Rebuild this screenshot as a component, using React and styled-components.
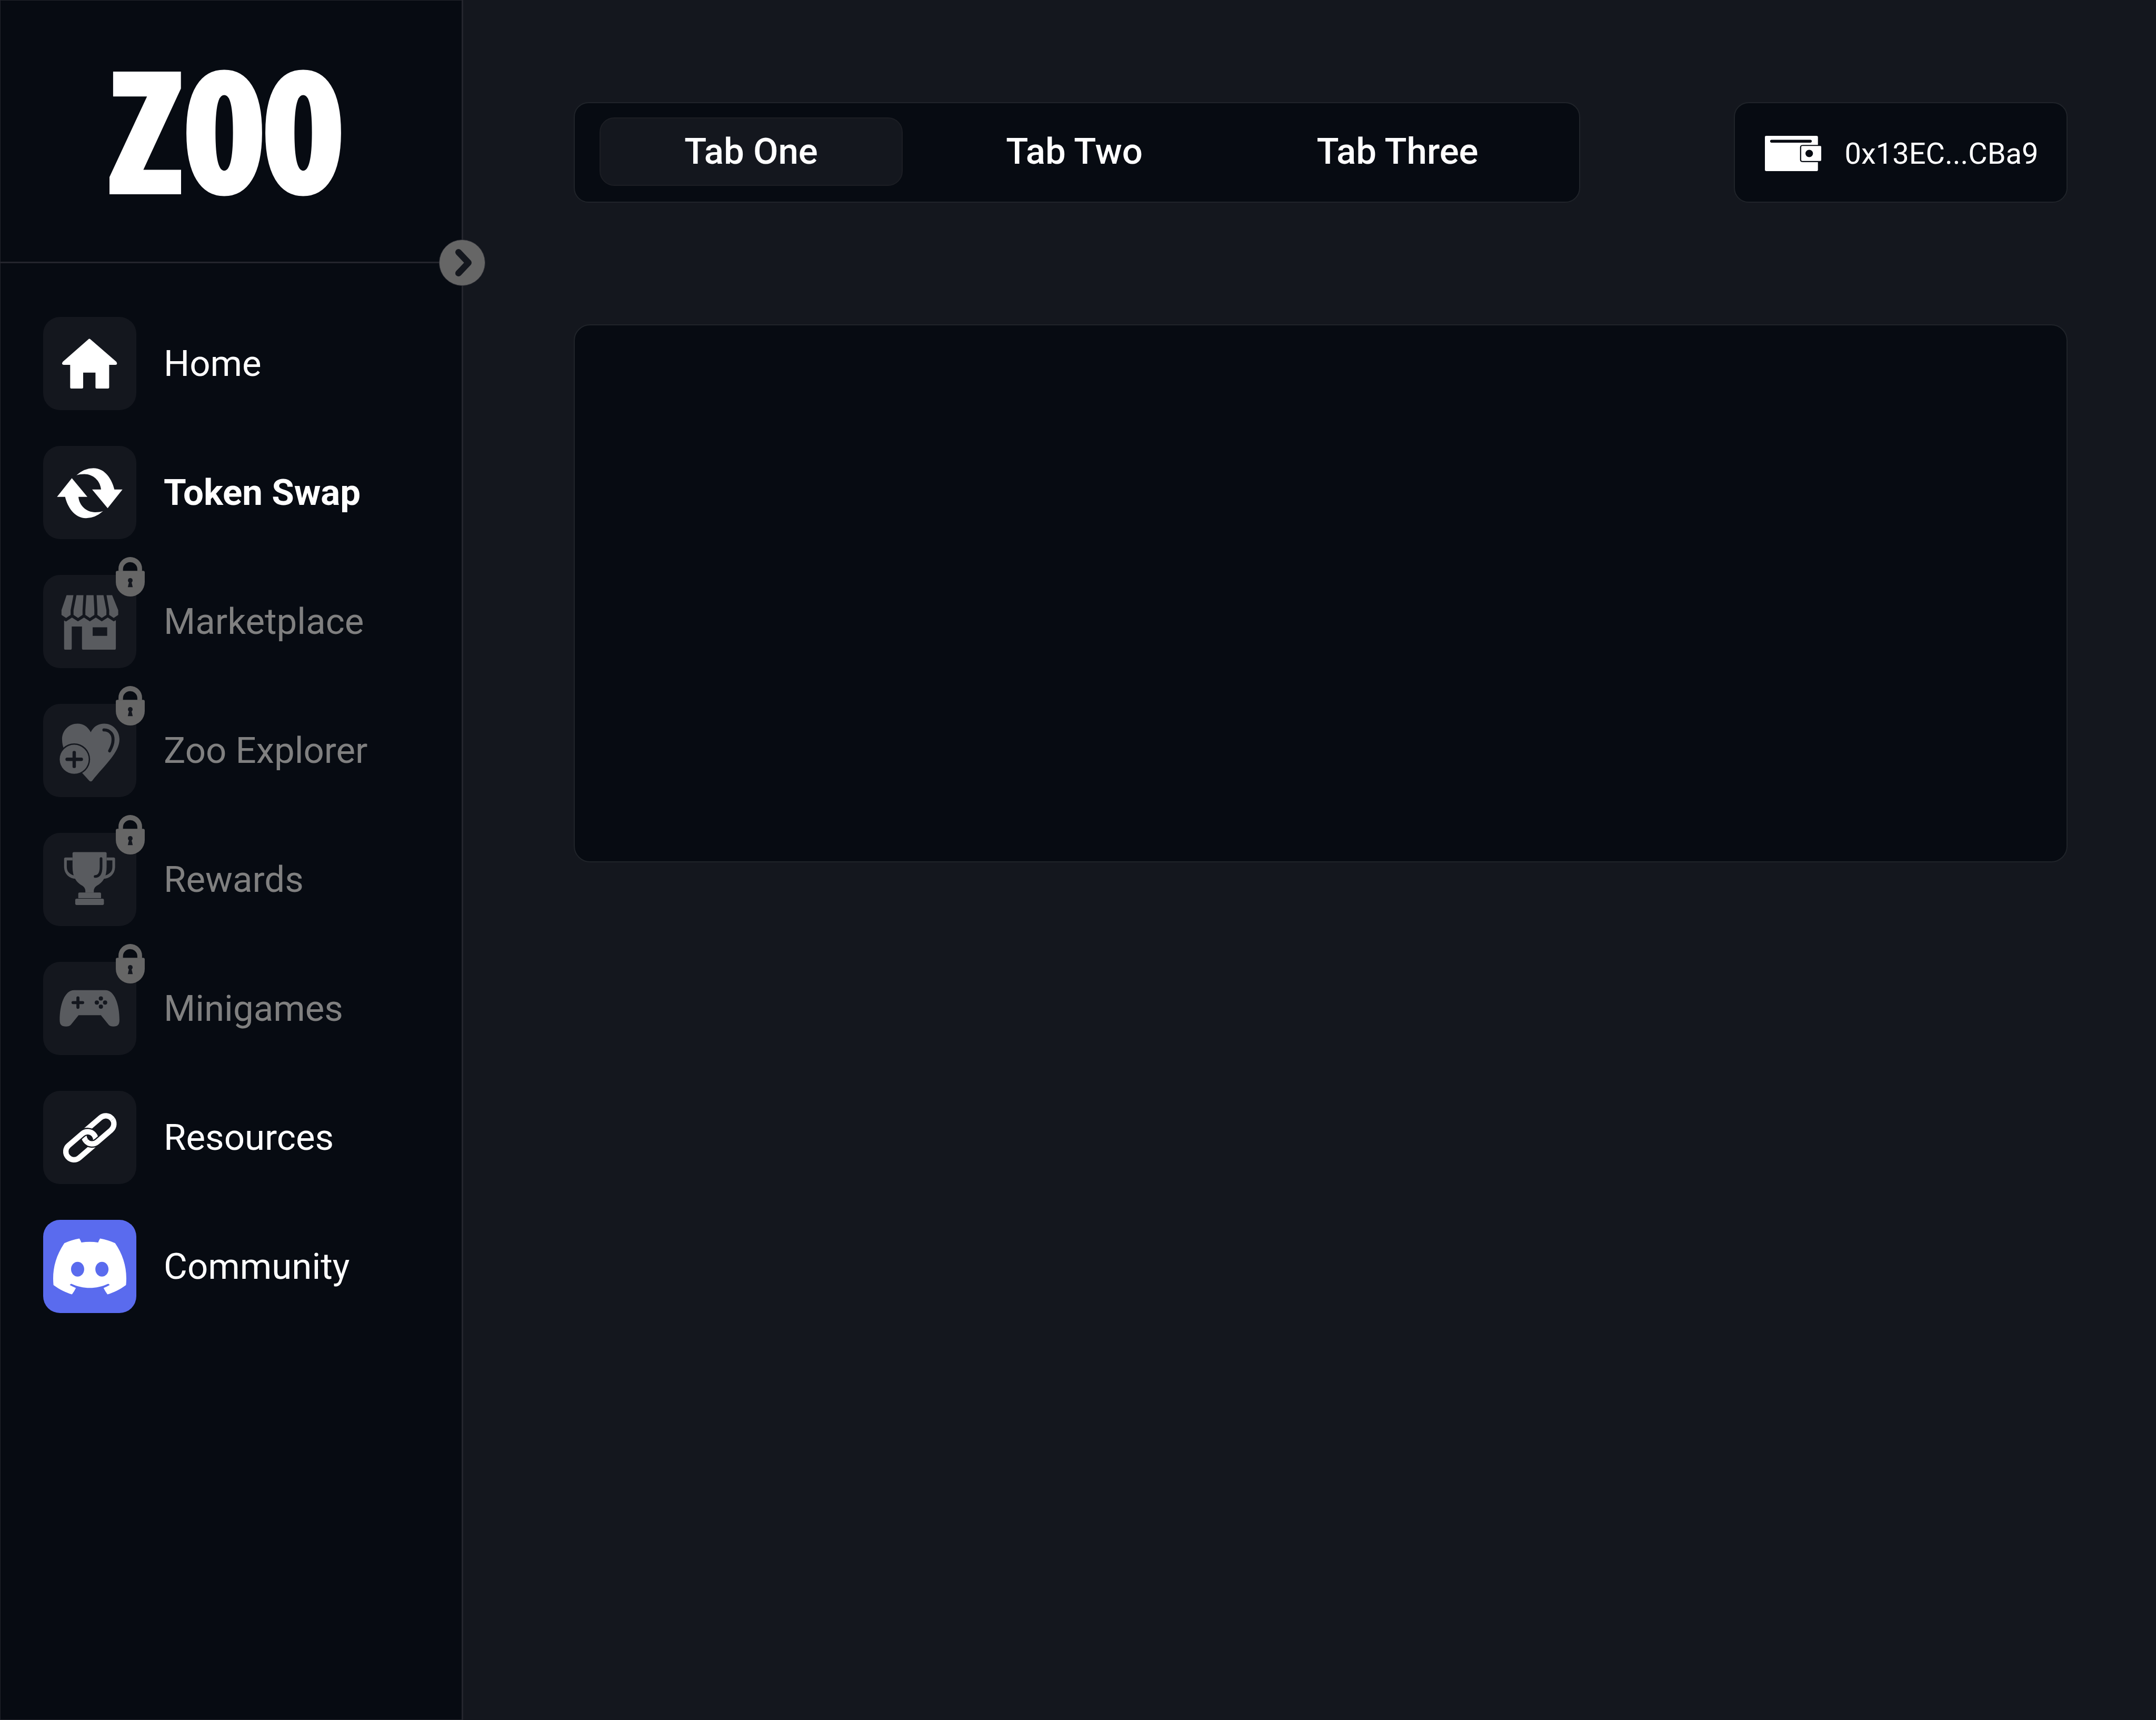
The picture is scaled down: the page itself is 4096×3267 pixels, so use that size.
import React, { useState } from "react";
import styled, { createGlobalStyle } from "styled-components";
import { SiDiscord } from "react-icons/si";

const color = {
  page: "#14171e",
  panel: "#070b12",
  line: "#24252d",
  cardLine: "#20242a",
  tile: "#14171e",
  muted: "#808080",
  mutedIcon: "#595b5f",
  badge: "#666666",
  discord: "#5a6bee",
};

const GlobalStyle = createGlobalStyle`
  * { box-sizing: border-box; }
  body {
    margin: 0;
    background: ${color.page};
    color: #ffffff;
    font-family: Roboto, "Liberation Sans", sans-serif;
  }
`;

const Page = styled.div`
  display: flex;
  min-height: 100vh;
  background: ${color.page};
`;

const Sidebar = styled.aside`
  position: relative;
  flex: none;
  width: 880px;
  background: ${color.panel};
  border: 1px solid ${color.line};
  border-right-width: 3px;
`;

const Brand = styled.header`
  position: relative;
  display: flex;
  align-items: center;
  justify-content: center;
  height: 499px;
  padding: 0 26px 32px 0;
  border-bottom: 3px solid ${color.line};
`;

const Logo = styled.span`
  font-family: "Noto Sans Mono CJK SC", "Liberation Sans Narrow", "Noto Sans CJK SC", sans-serif;
  font-size: 300px;
  line-height: 400px;
  font-weight: 900;
  -webkit-text-stroke: 10px #ffffff;
`;

const Toggle = styled.button`
  position: absolute;
  right: -45px;
  bottom: -46px;
  width: 88px;
  height: 88px;
  padding: 0;
  border: 1px solid #303138;
  border-radius: 50%;
  background: ${color.badge};
  cursor: pointer;

  svg {
    display: block;
    width: 100%;
    height: 100%;
  }
`;

const Nav = styled.nav`
  display: flex;
  flex-direction: column;
  gap: 68px;
  padding: 102px 81px;
`;

const NavLink = styled.a`
  display: flex;
  align-items: center;
  gap: 52px;
  color: ${(p) => (p.$locked ? color.muted : "#ffffff")};
  font-size: 69px;
  line-height: 80px;
  font-weight: ${(p) => (p.$active ? 700 : 400)};
  text-decoration: none;
  white-space: nowrap;
`;

const Tile = styled.span`
  position: relative;
  display: flex;
  align-items: center;
  justify-content: center;
  flex: none;
  width: 177px;
  height: 177px;
  border-radius: 32px;
  background: ${(p) => p.$fill || color.tile};
  color: ${(p) => (p.$locked ? color.mutedIcon : "#ffffff")};
`;

const Glyph = styled.svg`
  width: 100%;
  height: 100%;
  fill: currentColor;
`;

const LockBadge = styled.svg`
  position: absolute;
  top: -34px;
  right: -16px;
  width: 55px;
  height: 75px;
  fill: ${color.badge};
`;

const Main = styled.main`
  flex: 1;
  min-width: 0;
  display: flex;
  flex-direction: column;
  gap: 231px;
  padding: 194px 168px 194px 210px;
`;

const TopBar = styled.header`
  display: flex;
  align-items: stretch;
  justify-content: space-between;
  gap: 48px;
  height: 191px;
`;

const Tabs = styled.div`
  display: flex;
  flex: 0 1 1912px;
  gap: 38px;
  padding: 27px 57px 30px 47px;
  border: 2px solid ${color.cardLine};
  border-radius: 28px;
  background: ${color.panel};
`;

const Tab = styled.button`
  flex: 1;
  padding: 0;
  border: 2px solid ${(p) => (p.$active ? "#1c1e24" : "transparent")};
  border-radius: 28px;
  background: ${(p) => (p.$active ? color.tile : "transparent")};
  color: #ffffff;
  font-family: inherit;
  font-size: 69px;
  line-height: 80px;
  font-weight: 500;
  cursor: pointer;
`;

const Wallet = styled.button`
  display: flex;
  align-items: center;
  justify-content: center;
  gap: 44px;
  flex: none;
  width: 634px;
  padding: 4px 0 0 4px;
  border: 2px solid ${color.cardLine};
  border-radius: 28px;
  background: ${color.panel};
  color: #ffffff;
  font-family: inherit;
  font-size: 56px;
  line-height: 64px;
  cursor: pointer;
`;

const WalletGlyph = styled.svg`
  width: 107px;
  height: 67px;
  fill: currentColor;
`;

const Card = styled.section`
  height: 1022px;
  border: 2px solid ${color.cardLine};
  border-radius: 31px;
  background: ${color.panel};
`;

const HomeIcon = () => (
  <Glyph viewBox="0 0 276 276">
    <path
      fillRule="evenodd"
      d="M133.500 66.500Q137 63 140.500 66.500L217 133Q222 142 213 142H195.500V209Q195.500 212 192 212H158Q155 212 155 209V165H118.500V209Q118.500 212 115 212H83Q80 212 80 209V142H61Q53 141 58 133Z"
    />
  </Glyph>
);

const swapArrow =
  "M98.500 87Q122 66 149 66C184 66 204 100 211 129H235L191 184.500L145 129H171.500C169 103 148 83.500 122 83.500Q108 83.500 98.500 87Z";

const SwapIcon = () => (
  <Glyph viewBox="0 0 276 276">
    <path d={swapArrow} />
    <path d={swapArrow} transform="rotate(180 138 140)" />
  </Glyph>
);

const MarketIcon = () => (
  <Glyph viewBox="25 201 828 828">
    <polygon points="233,381 294,381 269,514 269,557 229,584 188,557 188,514" />
    <polygon points="321,381 383,381 375,514 375,557 335,584 295,557 295,514" />
    <polygon points="409,381 473,381 480,514 480,557 440,584 400,557 400,514" />
    <polygon points="500,381 561,381 587,514 587,557 546,584 507,557 507,514" />
    <polygon points="588,381 638,381 692,514 692,557 652,584 612,557 612,514" />
    <path
      fillRule="evenodd"
      d="M211 606L228 615L281 580L334 614L388 580L440 614L493 580L546 614L599 580L652 614L671 603V853Q671 865 659 865H382Q370 865 370 853V660H279V853Q279 865 267 865H223Q211 865 211 853ZM465 666V742H594V666Z"
    />
  </Glyph>
);

const ExplorerIcon = () => (
  <Glyph viewBox="0 0 276 276">
    <path d="M141 84C132 67 118 58.600 102 58.600C76 58.600 56 79 56 105C56 150 95 180 116 205L137 228Q141 231 145 228C182 181 226 145 226 105C226 79 206 58.600 181 58.600C164 58.600 149 67 141 84Z" />
    <circle cx="92" cy="164" r="47" fill={color.tile} />
    <circle cx="92" cy="164" r="43" />
    <g fill="none" stroke={color.tile} strokeWidth="10" strokeLinecap="round">
      <path d="M92 144V185M71 164H113" />
      <path d="M180 77C199 77 208 92 207 107C207 120 202 130 197 139" strokeWidth="9" />
    </g>
  </Glyph>
);

const trophyHandle =
  "M87 73H66Q62 73 62 77V102C63 122 77 135 97 136L91 126C77 121 70 114 70 100V81.500H87Z";

const TrophyIcon = () => (
  <Glyph viewBox="0 0 276 276">
    <path d="M91 57H184Q188 57 188 61V100C188 130 178 146 158 157Q150 163 150 172V177H125V172Q125 163 117 157C97 146 87 130 87 100V61Q87 57 91 57Z" />
    <path d={trophyHandle} />
    <path d={trophyHandle} transform="translate(275 0) scale(-1 1)" />
    <path d="M108 176.500H168Q171.500 176.500 171.500 180V193.500H104V180Q104 176.500 108 176.500Z" />
    <rect x="95" y="195" width="85" height="18.500" rx="4" />
    <path
      d="M171.500 76V100C171.500 117 167 129 154 129"
      fill="none"
      stroke={color.tile}
      strokeWidth="8"
      strokeLinecap="round"
    />
  </Glyph>
);

const GamepadIcon = () => (
  <Glyph viewBox="0 0 276 276">
    <path d="M92 84H184C212 84 226 128 226 172C226 186 221 191.500 208 191.500Q199 191.500 194 186.500L171 158H105L82 186.500Q77 191.500 68 191.500C54 191.500 49 186 49 172C49 128 63 84 92 84Z" />
    <path
      d="M103 106.500V134.500M88.500 120.500H117"
      stroke={color.tile}
      strokeWidth="9"
      strokeLinecap="round"
    />
    <g fill={color.tile}>
      <circle cx="171" cy="108.500" r="6.300" />
      <circle cx="159" cy="120.500" r="6.300" />
      <circle cx="183.500" cy="120.500" r="6.300" />
      <circle cx="171" cy="132.500" r="6.300" />
    </g>
  </Glyph>
);

const upperRing = {
  x: 368,
  y: 312.5,
  width: 305,
  height: 145,
  rx: 72.5,
  transform: "rotate(-40.700 520.500 385)",
};

const lowerRing = {
  x: 207,
  y: 454,
  width: 305,
  height: 145,
  rx: 72.5,
  transform: "rotate(-40.700 359.500 526.500)",
};

const ChainIcon = () => (
  <Glyph viewBox="25 39 828 828">
    <defs>
      <clipPath id="chain-front">
        <polygon points="15,795 865,115 853,867" />
      </clipPath>
    </defs>
    <g fill="none" stroke="currentColor" strokeWidth="48">
      <rect {...upperRing} />
      <rect {...lowerRing} stroke={color.tile} strokeWidth="70" />
      <rect {...lowerRing} />
      <g clipPath="url(#chain-front)">
        <rect {...upperRing} stroke={color.tile} strokeWidth="70" />
        <rect {...upperRing} />
      </g>
    </g>
  </Glyph>
);

const DiscordIcon = () => <SiDiscord size={139} />;

const Lock = () => (
  <LockBadge viewBox="674 47 258 352" aria-hidden="true">
    <path d="M674 185Q674 170 689 170H917Q932 170 932 185V270A129 129 0 0 1 674 270Z" />
    <path d="M698 172V150A105 103 0 0 1 908 150V172H866V155A64 62 0 0 0 738 155V172Z" />
    <g fill={color.tile}>
      <circle cx="803" cy="256" r="21" />
      <path d="M792 270L781 316H825L814 270Z" />
    </g>
  </LockBadge>
);

const links = [
  { label: "Home", Icon: HomeIcon },
  { label: "Token Swap", Icon: SwapIcon, active: true },
  { label: "Marketplace", Icon: MarketIcon, locked: true },
  { label: "Zoo Explorer", Icon: ExplorerIcon, locked: true },
  { label: "Rewards", Icon: TrophyIcon, locked: true },
  { label: "Minigames", Icon: GamepadIcon, locked: true },
  { label: "Resources", Icon: ChainIcon },
  { label: "Community", Icon: DiscordIcon, fill: color.discord },
];

const tabs = ["Tab One", "Tab Two", "Tab Three"];

export default function App() {
  const [tab, setTab] = useState(tabs[0]);

  return (
    <>
      <GlobalStyle />
      <Page>
        <Sidebar>
          <Brand>
            <Logo>ZOO</Logo>
            <Toggle type="button" aria-label="Toggle sidebar">
              <svg viewBox="-43 -43 86 86">
                <path
                  d="M-7 -20L12 0L-7 20"
                  fill="none"
                  stroke={color.tile}
                  strokeWidth="12"
                  strokeLinecap="round"
                  strokeLinejoin="round"
                />
              </svg>
            </Toggle>
          </Brand>
          <Nav>
            {links.map(({ label, Icon, active, locked, fill }) => (
              <NavLink
                key={label}
                href="#"
                $active={active}
                $locked={locked}
                aria-current={active ? "page" : undefined}
                aria-disabled={locked}
              >
                <Tile $fill={fill} $locked={locked}>
                  <Icon />
                  {locked && <Lock />}
                </Tile>
                {label}
              </NavLink>
            ))}
          </Nav>
        </Sidebar>
        <Main>
          <TopBar>
            <Tabs role="tablist">
              {tabs.map((name) => (
                <Tab
                  key={name}
                  type="button"
                  role="tab"
                  aria-selected={name === tab}
                  $active={name === tab}
                  onClick={() => setTab(name)}
                >
                  {name}
                </Tab>
              ))}
            </Tabs>
            <Wallet type="button">
              <WalletGlyph viewBox="203 375 239 312" preserveAspectRatio="none">
                <path
                  fillRule="evenodd"
                  d="M209 375H421Q428 375 428 385V455H365Q352 455 352 475V588Q352 608 365 608H428V676Q428 687 421 687H209Q203 687 203 677V385Q203 375 209 375ZM230 410Q225 410 225 422Q225 435 230 435H397Q402 435 402 422Q402 410 397 410Z"
                />
                <path
                  fillRule="evenodd"
                  d="M362 465H438Q442 465 442 473V589Q442 597 438 597H362Q357 597 357 589V473Q357 465 362 465ZM391 498A16 33 0 0 0 391 564A16 33 0 0 0 391 498Z"
                />
              </WalletGlyph>
              0x13EC...CBa9
            </Wallet>
          </TopBar>
          <Card />
        </Main>
      </Page>
    </>
  );
}
